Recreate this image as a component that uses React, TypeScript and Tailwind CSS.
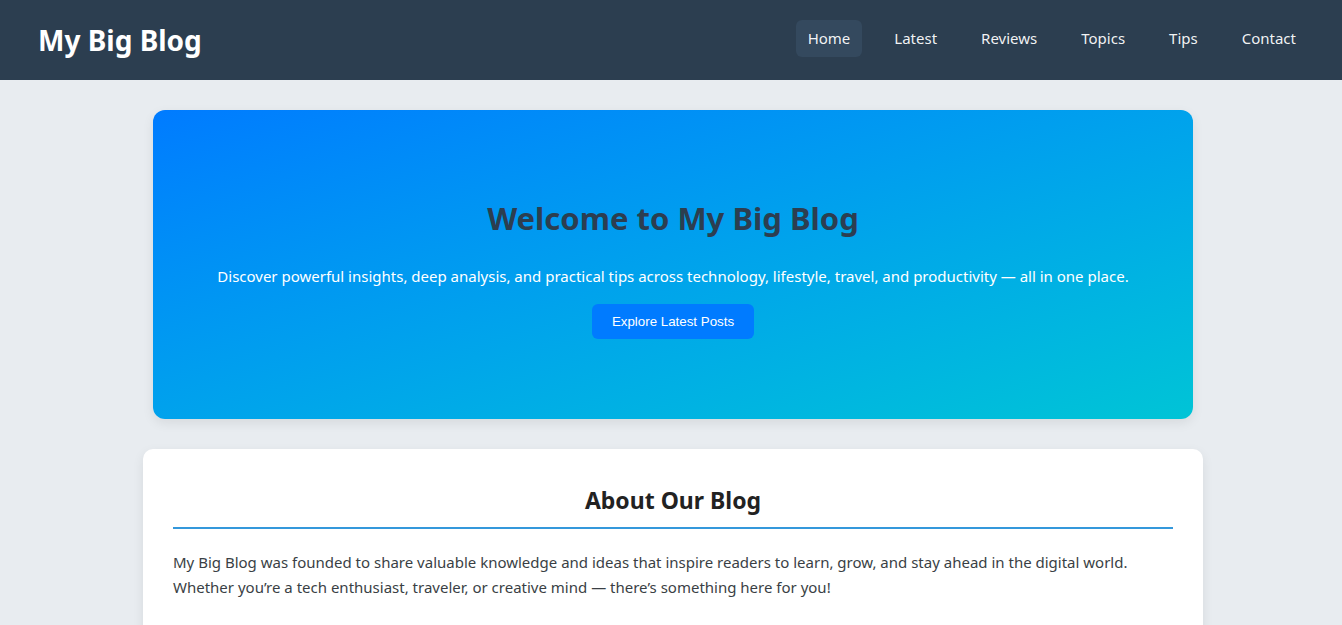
const NAV = ["Home", "Latest", "Reviews", "Topics", "Tips", "Contact"];

const FONT = "font-['Segoe_UI','Noto_Sans','Open_Sans',sans-serif]";

export default function App() {
  return (
    <div className={`min-h-screen bg-[#e8ecf0] ${FONT}`}>
      <header className="h-20 bg-[#2c3e50] flex items-center justify-between pl-[38px] pr-[34px]">
        <h1 className="text-[28px] font-bold text-white leading-none">My Big Blog</h1>
        <nav className="flex items-center gap-[20px] pb-1">
          {NAV.map((item, i) => (
            <a
              key={item}
              href="#"
              className={`px-3 py-2 rounded-md text-[15px] leading-[21px] text-white/95 ${i === 0 ? "bg-[#34495e]" : ""}`}
            >
              {item}
            </a>
          ))}
        </nav>
      </header>

      <main className="pl-1">
        <section className="mx-auto mt-[30px] w-[1040px] h-[309px] pt-1 rounded-xl bg-linear-to-br from-[#007bff] to-[#00c4d6] flex flex-col items-center justify-center text-center shadow-[0_4px_12px_rgba(0,0,0,0.08)]">
          <h2 className="text-[31px] font-bold text-[#2c3e50] leading-[48px]">Welcome to My Big Blog</h2>
          <p className="mt-[22px] text-[15px] leading-6 text-white">
            Discover powerful insights, deep analysis, and practical tips across technology, lifestyle, travel, and
            productivity — all in one place.
          </p>
          <button className="mt-4 h-[35px] px-5 rounded-md bg-[#007bff] text-white text-[13.33px] font-['Liberation_Sans',Arial,sans-serif]">
            Explore Latest Posts
          </button>
        </section>

        <section className="mx-auto mt-[30px] w-[1060px] bg-white rounded-[10px] px-[30px] pt-[35px] pb-8 shadow-[0_4px_12px_rgba(0,0,0,0.08)]">
          <h2 className="text-[23px] font-bold text-[#222] text-center leading-8 pb-[11px] border-b-2 border-[#3498db]">
            About Our Blog
          </h2>
          <p className="mt-[21px] text-[15px] leading-[25px] text-[#3a3f45]">
            My Big Blog was founded to share valuable knowledge and ideas that inspire readers to learn, grow, and stay
            ahead in the digital world.
            <br />
            Whether you’re a tech enthusiast, traveler, or creative mind — there’s something here for you!
          </p>
          <p className="mt-5 text-[15px] leading-[25px] text-[#3a3f45]">
            From in-depth tech breakdowns and honest product reviews to travel guides, productivity hacks and everyday
            lifestyle tips, every article is written to help you make smarter decisions and enjoy the journey.
          </p>
        </section>
      </main>
    </div>
  );
}
